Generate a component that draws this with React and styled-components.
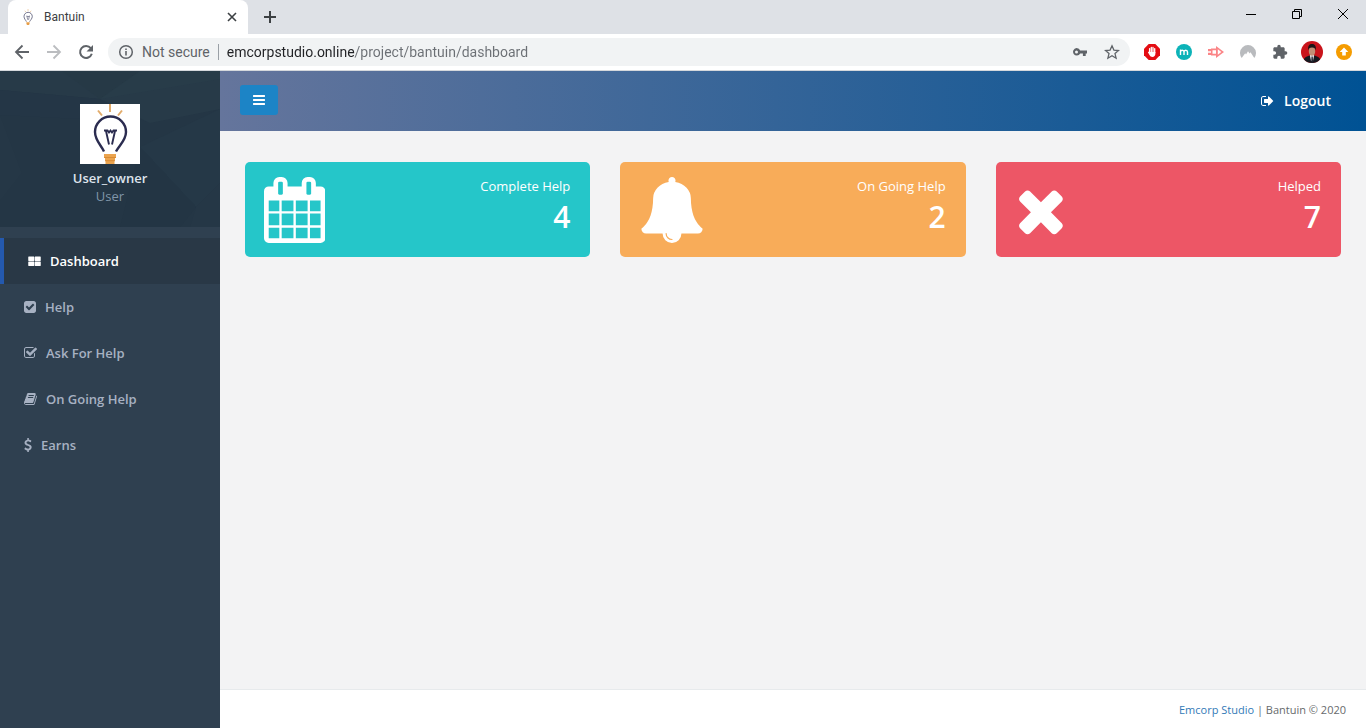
import React from "react";
import styled, { createGlobalStyle, css } from "styled-components";

const GlobalStyle = createGlobalStyle`
  *, *::before, *::after { box-sizing: border-box; }
  body {
    margin: 0;
    background: #f3f3f4;
    color: #676a6c;
    font-family: "Open Sans", "Noto Sans", sans-serif;
    font-size: 13px;
    line-height: 18px;
  }
  button { font: inherit; }
`;

/* ---------- icons ---------- */

const TILE = "v448q0 26-19 45t-45 19h-640q-26 0-45-19t-19-45v-448q0-26 19-45t45-19h640q26 0 45 19t19 45z";
const BAR = "v128q0 26-19 45t-45 19h-1408q-26 0-45-19t-19-45v-128q0-26 19-45t45-19h1408q26 0 45 19t19 45z";

const GLYPHS = {
  tiles: {
    box: "64 0 1664 1792",
    d: `M864 1024${TILE}M864 384${TILE}M1696 1024${TILE}M1696 384${TILE}`,
  },
  bars: {
    box: "128 0 1536 1792",
    d: `M1664 1344${BAR}M1664 832${BAR}M1664 320${BAR}`,
  },
  check: {
    box: "128 0 1536 1792",
    d: "M813 1299l614-614q19-19 19-45t-19-45l-102-102q-19-19-45-19t-45 19l-467 467-211-211q-19-19-45-19t-45 19l-102 102q-19 19-19 45t19 45l358 358q19 19 45 19t45-19zm851-883v960q0 119-84.5 203.5t-203.5 84.5h-960q-119 0-203.5-84.5t-84.5-203.5v-960q0-119 84.5-203.5t203.5-84.5h960q119 0 203.5 84.5t84.5 203.5z",
  },
  checkOutline: {
    box: "64 0 1664 1792",
    d: "M1472 930v318q0 119-84.5 203.5t-203.5 84.5h-832q-119 0-203.5-84.5t-84.5-203.5v-832q0-119 84.5-203.5t203.5-84.5h832q63 0 117 25 15 7 18 23 3 17-9 29l-49 49q-10 10-23 10-3 0-9-2-23-6-45-6h-832q-66 0-113 47t-47 113v832q0 66 47 113t113 47h832q66 0 113-47t47-113v-254q0-13 9-22l64-64q10-10 23-10 6 0 12 3 20 8 20 29zm231-489l-814 814q-24 24-57 24t-57-24l-430-430q-24-24-24-57t24-57l110-110q24-24 57-24t57 24l263 263 647-647q24-24 57-24t57 24l110 110q24 24 24 57t-24 57z",
  },
  book: {
    box: "64 0 1664 1792",
    d: "M1703 478q40 57 18 129l-275 906q-19 64-76.5 107.5t-122.5 43.5h-923q-77 0-148.5-53.5t-99.5-131.5q-24-67-2-127 0-4 3-27t4-37q1-8-3-21.5t-3-19.5q2-11 8-21t16.5-23.5 16.5-23.5q23-38 45-91.5t30-91.5q3-10 .5-30t-.5-28q3-11 17-28t17-23q21-36 42-92t25-90q1-9-2.5-32t.5-28q4-13 22-30.5t22-22.5q19-26 42.5-84.5t27.5-96.5q1-8-3-25.5t-2-26.5q2-8 9-18t18-23 17-21q8-12 16.5-30.5t15-35 16-36 19.5-32 26.5-23.5 36-11.5 47.5 5.5l-1 3q38-9 51-9h761q74 0 114 56t18 130l-274 906q-36 119-71.500 153.500t-128.500 34.500h-869q-27 0-38 15-11 16-1 43 24 70 144 70h923q29 0 56-15.500t35-41.500l300-987q7-22 5-57 38 15 59 43zm-1064 2q-4 13 2 22.500t20 9.500h608q13 0 25.500-9.500t16.500-22.500l21-64q4-13-2-22.500t-20-9.500h-608q-13 0-25.500 9.500t-16.500 22.500zm-83 256q-4 13 2 22.500t20 9.500h608q13 0 25.500-9.500t16.500-22.500l21-64q4-13-2-22.500t-20-9.500h-608q-13 0-25.500 9.500t-16.500 22.500z",
  },
  dollar: {
    box: "384 0 1024 1792",
    d: "M1362 1185q0 153-99.5 263.5t-258.5 136.5v175q0 14-9 23t-23 9h-135q-13 0-22.5-9.5t-9.5-22.5v-175q-66-9-127.5-31t-101.5-44.5-74-48-46.5-37.5-17.5-18q-17-21-2-41l103-135q7-10 23-12 15-2 24 9l2 2q113 99 243 125 37 8 74 8 81 0 142.5-43t61.5-122q0-28-15-53t-33.5-42-58.5-37.5-66-32-80-32.5q-39-16-61.5-25t-61.5-26.5-62.5-31-56.5-35.5-53.5-42.5-43.5-49-35.5-58-21-66.5-8.5-78q0-138 98-242t255-134v-180q0-13 9.5-22.5t22.5-9.5h135q14 0 23 9t9 23v176q57 6 110.5 23t87 33.5 63.5 37.5 39 29 15 14q17 18 5 38l-81 146q-8 15-23 16-14 3-27-7-3-3-14.5-12t-39-26.5-58.5-32-74.5-26-85.5-11.5q-95 0-155 43t-60 111q0 26 8.5 48t29.5 41.5 39.5 33 56 31 60.5 27 70 27.5q53 20 81 31.5t76 35 75.5 42.5 62 50 53 63.5 31.5 76.5 13 94z",
  },
  signOut: {
    box: "64 0 1664 1792",
    d: "M704 1440q0 4 1 20t.5 26.5-3 23.5-10 19.5-20.5 6.5h-320q-119 0-203.5-84.5t-84.5-203.5v-704q0-119 84.5-203.5t203.5-84.5h320q13 0 22.5 9.5t9.5 22.5q0 4 1 20t.5 26.5-3 23.5-10 19.5-20.5 6.5h-320q-66 0-113 47t-47 113v704q0 66 47 113t113 47h312l11.5 1 11.5 3 8 5.5 7 9 2 13.5zm928-544q0 26-19 45l-544 544q-19 19-45 19t-45-19-19-45v-288h-448q-26 0-45-19t-19-45v-384q0-26 19-45t45-19h448v-288q0-26 19-45t45-19 45 19l544 544q19 19 19 45z",
  },
  calendar: {
    box: "64 0 1664 1792",
    d: "M192 1664h288v-288h-288v288zm352 0h320v-288h-320v288zm-352-352h288v-320h-288v320zm352 0h320v-320h-320v320zm-352-384h288v-288h-288v288zm736 736h320v-288h-320v288zm-384-736h320v-288h-320v288zm768 736h288v-288h-288v288zm-384-352h320v-320h-320v320zm-352-864v-288q0-13-9.5-22.5t-22.5-9.5h-64q-13 0-22.5 9.5t-9.5 22.5v288q0 13 9.5 22.5t22.5 9.5h64q13 0 22.5-9.5t9.5-22.5zm736 864h288v-320h-288v320zm-384-384h320v-288h-320v288zm384 0h288v-288h-288v288zm32-480v-288q0-13-9.5-22.5t-22.5-9.5h-64q-13 0-22.5 9.5t-9.5 22.5v288q0 13 9.5 22.5t22.5 9.5h64q13 0 22.5-9.5t9.5-22.5zm384-64v1280q0 52-38 90t-90 38h-1408q-52 0-90-38t-38-90v-1280q0-52 38-90t90-38h128v-96q0-66 47-113t113-47h64q66 0 113 47t47 113v96h384v-96q0-66 47-113t113-47h64q66 0 113 47t47 113v96h128q52 0 90 38t38 90z",
  },
  bell: {
    box: "0 0 1792 1792",
    d: "M912 1696q0-16-16-16-59 0-101.5-42.5t-42.5-101.5q0-16-16-16t-16 16q0 73 51.5 124.5t124.5 51.5q16 0 16-16zm816-288q0 52-38 90t-90 38h-448q0 106-75 181t-181 75-181-75-75-181h-448q-52 0-90-38t-38-90q50-42 91-88t85-119.5 74.5-158.5 50-206 19.5-260q0-152 117-282.5t307-158.5q-8-19-8-39 0-40 28-68t68-28 68 28 28 68q0 20-8 39 190 28 307 158.5t117 282.5q0 139 19.5 260t50 206 74.5 158.5 85 119.5 91 88z",
  },
  times: {
    box: "192 0 1408 1792",
    d: "M1490 1322q0 40-28 68l-136 136q-28 28-68 28t-68-28l-294-294-294 294q-28 28-68 28t-68-28l-136-136q-28-28-28-68t28-68l294-294-294-294q-28-28-28-68t28-68l136-136q28-28 68-28t68 28l294 294 294-294q28-28 68-28t68 28l136 136q28 28 28 68t-28 68l-294 294 294 294q28 28 28 68z",
  },
};

const GlyphSvg = styled.svg`
  display: block;
  flex: none;
  width: auto;
  height: ${(p) => p.$size}px;
  fill: currentColor;
`;

const Glyph = ({ name, size = 14 }) => (
  <GlyphSvg $size={size} viewBox={GLYPHS[name].box} aria-hidden="true">
    <path d={GLYPHS[name].d} />
  </GlyphSvg>
);

const BulbLogo = ({ size }) => (
  <svg width={size} height={size} viewBox="0 0 60 60" aria-hidden="true">
    <rect width="60" height="60" fill="#fff" />
    <path d="M30 0v8M18 6.500l4 5M42 6.500l-4 5" stroke="#e2ab6a" strokeWidth="2" fill="none" />
    <path d="M24 47.500c-2.500-6-9-11-9-19.500a15.500 15.500 0 0 1 31 0c0 8.500-7 13.500-10 19.500" fill="none" stroke="#2b2c50" strokeWidth="2.400" />
    <path d="M24 26.500h3.500l1.500 2 1.500-2 1.500 2 1.500-2h3.500M26 27l3 13.500M35 27l-3 13.500" fill="none" stroke="#2b2c50" strokeWidth="1.900" />
    <path d="M24 50h12v4H24zM25 53.500h10v3H25zM25.500 56h9V60h-9z" fill="#eba44f" />
    <path d="M24 53.500h12M25 56.700h10" stroke="#d98c35" strokeWidth="1" />
  </svg>
);

/* ---------- browser chrome ---------- */

const Page = styled.div`
  display: flex;
  flex-direction: column;
  min-height: 100vh;
`;

const TabStrip = styled.div`
  display: flex;
  height: 34px;
  padding-left: 8px;
  background: #dee1e6;
`;

const Tab = styled.div`
  display: flex;
  align-items: center;
  width: 240px;
  padding: 0 8px 0 12px;
  border-radius: 8px 8px 0 0;
  background: #fff;
  color: #3c4043;
  font-family: Roboto, sans-serif;
  font-size: 12px;
`;

const TabTitle = styled.span`
  flex: 1;
  margin-left: 8px;
`;

const ChromeButton = styled.button`
  display: flex;
  align-items: center;
  justify-content: center;
  flex: none;
  width: ${(p) => p.$width || 32}px;
  height: ${(p) => p.$height || 28}px;
  padding: 0;
  border: 0;
  background: none;
  color: #5f6368;
`;

const NewTabSlot = styled.div`
  display: flex;
  align-items: center;
  flex: 1;
  padding-left: 6px;
`;

const Toolbar = styled.div`
  display: flex;
  align-items: center;
  height: 37px;
  padding: 0 6px;
  border-bottom: 1px solid #d5d8dc;
  background: #fff;
`;

const AddressBar = styled.div`
  display: flex;
  align-items: center;
  flex: 1;
  height: 28px;
  margin: 0 6px;
  padding: 0 2px 0 10px;
  border-radius: 14px;
  background: #f1f3f4;
`;

const SiteInfo = styled.button`
  display: flex;
  align-items: center;
  gap: 8px;
  padding: 0 8px 0 0;
  border: 0;
  border-right: 1px solid #9aa0a6;
  background: none;
  color: #5f6368;
  font-family: Roboto, sans-serif;
  font-size: 14px;
  line-height: 16px;
`;

const UrlInput = styled.input`
  flex: 1;
  min-width: 0;
  height: 20px;
  margin-left: 8px;
  padding: 0;
  border: 0;
  outline: 0;
  background: linear-gradient(to right, #202124 128px, #6b6f74 128px);
  background-clip: text;
  -webkit-text-fill-color: transparent;
  font-family: Roboto, sans-serif;
  font-size: 14px;
`;

const Stroke = ({ d, size = 16, width = 2, color = "currentColor" }) => (
  <svg width={size} height={size} viewBox={`0 0 ${size} ${size}`} fill="none" stroke={color} strokeWidth={width} aria-hidden="true">
    <path d={d} />
  </svg>
);

const BrowserChrome = () => (
  <header>
    <TabStrip>
      <Tab>
        <BulbLogo size={16} />
        <TabTitle>Bantuin</TabTitle>
        <ChromeButton $width={16} $height={16} aria-label="Close tab">
          <Stroke d="M4 4l8 8M12 4l-8 8" width={1.6} color="#3c4043" />
        </ChromeButton>
      </Tab>
      <NewTabSlot>
        <ChromeButton aria-label="New tab"><Stroke d="M8 2v12M2 8h12" color="#3c4043" /></ChromeButton>
      </NewTabSlot>
      <ChromeButton $width={46} aria-label="Minimize"><Stroke d="M3 8.500h10" width={1} color="#000" /></ChromeButton>
      <ChromeButton $width={46} aria-label="Restore"><Stroke d="M3.500 5.500h7v7h-7zM5.500 5.500v-2h7v7h-2" width={1} color="#000" /></ChromeButton>
      <ChromeButton $width={46} aria-label="Close window"><Stroke d="M3 3l10 10M13 3L3 13" width={1} color="#000" /></ChromeButton>
    </TabStrip>
    <Toolbar>
      <ChromeButton aria-label="Back"><Stroke d="M15 8H2M8.500 1.500L2 8l6.500 6.500" width={1.8} /></ChromeButton>
      <ChromeButton aria-label="Forward"><Stroke d="M1 8h13M7.500 1.500L14 8l-6.500 6.500" width={1.8} color="#bbbdc0" /></ChromeButton>
      <ChromeButton aria-label="Reload">
        <svg width="16" height="16" viewBox="0 0 16 16" aria-hidden="true">
          <path d="M12.800 4.200A6 6 0 1 0 13.800 9.800" fill="none" stroke="currentColor" strokeWidth="2" />
          <path d="M15 1v6.500H8.500z" fill="currentColor" />
        </svg>
      </ChromeButton>
      <AddressBar>
        <SiteInfo>
          <svg width="16" height="16" viewBox="0 0 16 16" aria-hidden="true">
            <circle cx="8" cy="8" r="6.300" fill="none" stroke="currentColor" strokeWidth="1.500" />
            <path d="M7.200 7h1.600v4.500H7.200zM7.200 4.400h1.600V6H7.200z" fill="currentColor" />
          </svg>
          Not secure
        </SiteInfo>
        <UrlInput aria-label="Address" defaultValue="emcorpstudio.online/project/bantuin/dashboard" />
        <ChromeButton aria-label="Saved passwords">
          <svg width="16" height="16" viewBox="0 0 16 16" aria-hidden="true">
            <path fillRule="evenodd" d="M4.500 4a3.800 3.800 0 0 1 3.700 2.600H15v3h-1.300V12h-2.800V9.600H8.200A3.800 3.800 0 1 1 4.500 4zm0 2.400a1.500 1.500 0 1 0 0 3 1.500 1.500 0 0 0 0-3z" fill="currentColor" />
          </svg>
        </ChromeButton>
        <ChromeButton aria-label="Bookmark this page">
          <Stroke d="M8 1.800l1.900 4.300 4.600.4-3.500 3.100 1.100 4.600L8 11.700l-4.100 2.500L5 9.600 1.500 6.500l4.600-.4z" width={1.3} />
        </ChromeButton>
      </AddressBar>
      <ChromeButton aria-label="Ad blocker">
        <svg width="16" height="16" viewBox="0 0 16 16" aria-hidden="true">
          <path d="M4.700 0h6.600L16 4.700v6.600L11.300 16H4.700L0 11.300V4.700z" fill="#e40d13" />
          <path d="M5.600 8.500V4.600M7.300 8V3.500M9 8V3.500M10.700 8.500V4.600" stroke="#fff" strokeWidth="1.300" strokeLinecap="round" />
          <path d="M4.900 8h6.500v1.800c0 2-1.200 3.200-2.900 3.200-1.500 0-2.400-.8-3-2L4 8.600c-.4-.9.500-1.300 1-.6z" fill="#fff" />
        </svg>
      </ChromeButton>
      <ChromeButton aria-label="Mail extension">
        <svg width="16" height="16" viewBox="0 0 16 16" aria-hidden="true">
          <circle cx="8" cy="8" r="8" fill="#0cb3b8" />
          <path d="M4.500 11V5.500M4.500 8c0-2.400 3.500-2.400 3.500 0v3M8 8c0-2.400 3.500-2.400 3.500 0v3" fill="none" stroke="#fff" strokeWidth="1.400" />
        </svg>
      </ChromeButton>
      <ChromeButton aria-label="Screen recorder">
        <svg width="16" height="16" viewBox="0 0 16 16" aria-hidden="true">
          <path fillRule="evenodd" d="M3 4.500h5V2l8 6-8 6v-2.500H3zM4.500 6.300v3.400H8V6.300zM9.800 5.300v5.400L13.300 8z" fill="#fb8587" />
          <path d="M0 5h3v2.200H0zM0 8.800h3V11H0z" fill="#fb8587" />
        </svg>
      </ChromeButton>
      <ChromeButton aria-label="VPN">
        <svg width="16" height="16" viewBox="0 0 16 16" aria-hidden="true">
          <path d="M1.700 14A8 8 0 1 1 14.300 14L10.500 8.200 9.600 9.600 8 7.200 6 10.400 5.200 9.300z" fill="#b9bbbe" />
        </svg>
      </ChromeButton>
      <ChromeButton aria-label="Extensions">
        <svg width="16" height="16" viewBox="0 0 24 24" aria-hidden="true">
          <path d="M20.500 11H19V7c0-1.100-.9-2-2-2h-4V3.500a2.500 2.500 0 0 0-5 0V5H4c-1.100 0-2 .9-2 2v3.800h1.500a2.700 2.700 0 0 1 0 5.400H2V20c0 1.100.9 2 2 2h3.800v-1.500a2.700 2.700 0 0 1 5.400 0V22H17c1.100 0 2-.9 2-2v-4h1.500a2.500 2.500 0 0 0 0-5z" fill="#5f6368" />
        </svg>
      </ChromeButton>
      <ChromeButton aria-label="Profile">
        <svg width="22" height="22" viewBox="0 0 22 22" aria-hidden="true">
          <clipPath id="avatar"><circle cx="11" cy="11" r="11" /></clipPath>
          <g clipPath="url(#avatar)">
            <rect width="22" height="22" fill="#c9141b" />
            <path d="M2 22c0-5 3-6.500 6.500-7.500h5C17 15.500 20 17 20 22z" fill="#16181f" />
            <path d="M8.800 14h4.400L12 20h-2z" fill="#e9e9ee" />
            <path d="M10.500 15.500h1.200l.5 6.500h-2z" fill="#20222c" />
            <ellipse cx="11" cy="10" rx="3.200" ry="4.800" fill="#c18f76" />
            <path d="M7.300 9.500C6.500 4.500 8.500 3 11 3s4.600 1.500 3.700 6.500c-.6-2.300-1-3-3.700-3s-3.100.7-3.700 3z" fill="#1c1416" />
          </g>
        </svg>
      </ChromeButton>
      <ChromeButton aria-label="Update">
        <svg width="16" height="16" viewBox="0 0 16 16" aria-hidden="true">
          <circle cx="8" cy="8" r="8" fill="#f59c00" />
          <path d="M8 3.500L12.300 8H9.800v3.500H6.200V8H3.700z" fill="#fff" />
        </svg>
      </ChromeButton>
    </Toolbar>
  </header>
);

/* ---------- application ---------- */

const AppLayout = styled.div`
  display: flex;
  flex: 1;
`;

const Sidebar = styled.aside`
  flex: none;
  width: 220px;
  background: #2f4050;
`;

const Profile = styled.div`
  position: relative;
  display: flex;
  flex-direction: column;
  align-items: center;
  height: 156px;
  padding-top: 33px;
  background: #243645;
`;

const Facets = styled.svg`
  position: absolute;
  inset: 0;
  width: 100%;
  height: 100%;
`;

const ProfileBody = styled.div`
  position: relative;
  display: flex;
  flex-direction: column;
  align-items: center;
  color: #8095a8;
  svg { display: block; margin-bottom: 5px; }
`;

const UserName = styled.strong`
  color: #dfe4ed;
  font-weight: 600;
`;

const Menu = styled.nav`
  padding-top: 11px;
`;

const MenuLink = styled.a`
  display: flex;
  align-items: center;
  gap: 9px;
  height: 46px;
  padding-left: 24px;
  color: #a7b1c2;
  font-weight: 600;
  text-decoration: none;
  ${(p) => p.$active && css`
    border-left: 4px solid #2459ae;
    background: #293846;
    color: #fff;
  `}
`;

const Main = styled.div`
  display: flex;
  flex-direction: column;
  flex: 1;
  min-width: 0;
`;

const TopBar = styled.div`
  display: flex;
  align-items: flex-start;
  justify-content: space-between;
  height: 60px;
  padding: 14px 35px 0 20px;
  background: linear-gradient(to right, #65759c, #005294);
`;

const MenuToggle = styled.button`
  display: flex;
  align-items: center;
  justify-content: center;
  width: 38px;
  height: 30px;
  padding: 0;
  border: 0;
  border-radius: 3px;
  background: #1c84c6;
  color: #fff;
`;

const LogoutLink = styled.a`
  display: flex;
  align-items: center;
  gap: 10px;
  height: 32px;
  color: #fff;
  font-size: 14px;
  font-weight: 600;
  text-decoration: none;
`;

const Cards = styled.main`
  display: grid;
  grid-template-columns: repeat(3, 1fr);
  gap: 30px;
  align-content: start;
  flex: 1;
  padding: 31px 25px;
`;

const Card = styled.section`
  display: flex;
  justify-content: space-between;
  height: 95px;
  padding: 15px 20px 14px 19px;
  border-radius: 5px;
  background: ${(p) => p.$color};
  color: #fff;
`;

const CardText = styled.div`
  text-align: right;
`;

const CardLabel = styled.div`
  font-weight: 400;
`;

const CardValue = styled.h2`
  margin: 5px 0 0;
  font-size: 30px;
  font-weight: 600;
  line-height: 33px;
`;

const Footer = styled.footer`
  height: 39px;
  padding: 11px 20px;
  border-top: 1px solid #e7eaec;
  background: #fff;
  font-size: 11px;
  text-align: right;
`;

const FooterLink = styled.a`
  color: #337ab7;
  text-decoration: none;
`;

const MENU = [
  { label: "Dashboard", icon: "tiles", active: true },
  { label: "Help", icon: "check" },
  { label: "Ask For Help", icon: "checkOutline" },
  { label: "On Going Help", icon: "book" },
  { label: "Earns", icon: "dollar" },
];

const CARDS = [
  { label: "Complete Help", value: 4, icon: "calendar", color: "#25c6c9" },
  { label: "On Going Help", value: 2, icon: "bell", color: "#f8ac59" },
  { label: "Helped", value: 7, icon: "times", color: "#ed5666" },
];

export default function App() {
  return (
    <Page>
      <GlobalStyle />
      <BrowserChrome />
      <AppLayout>
        <Sidebar>
          <Profile>
            <Facets viewBox="0 0 220 156" preserveAspectRatio="none" aria-hidden="true">
              <path d="M0 0H220V38L150 52 100 28 0 19z" fill="#273a48" />
              <path d="M62 0H140L100 28z" fill="#263946" />
              <path d="M140 0H220V8L100 28z" fill="#283c49" />
              <path d="M0 19L100 28 80 48 0 44z" fill="#243646" />
              <path d="M0 44L22 102 0 130z" fill="#253746" />
              <path d="M140 76L196 136 220 112V38z" fill="#253847" />
              <path d="M140 76L196 136 180 156H120z" fill="#233544" />
              <path d="M196 136L220 112V156H190z" fill="#253746" />
            </Facets>
            <ProfileBody>
              <BulbLogo size={60} />
              <UserName>User_owner</UserName>
              <span>User</span>
            </ProfileBody>
          </Profile>
          <Menu>
            {MENU.map((item) => (
              <MenuLink key={item.label} href="#" $active={item.active}>
                <Glyph name={item.icon} />
                {item.label}
              </MenuLink>
            ))}
          </Menu>
        </Sidebar>
        <Main>
          <TopBar>
            <MenuToggle aria-label="Toggle menu"><Glyph name="bars" /></MenuToggle>
            <LogoutLink href="#"><Glyph name="signOut" />Logout</LogoutLink>
          </TopBar>
          <Cards>
            {CARDS.map((card) => (
              <Card key={card.label} $color={card.color}>
                <Glyph name={card.icon} size={66} />
                <CardText>
                  <CardLabel>{card.label}</CardLabel>
                  <CardValue>{card.value}</CardValue>
                </CardText>
              </Card>
            ))}
          </Cards>
          <Footer>
            <FooterLink href="#">Emcorp Studio</FooterLink> | Bantuin © 2020
          </Footer>
        </Main>
      </AppLayout>
    </Page>
  );
}
